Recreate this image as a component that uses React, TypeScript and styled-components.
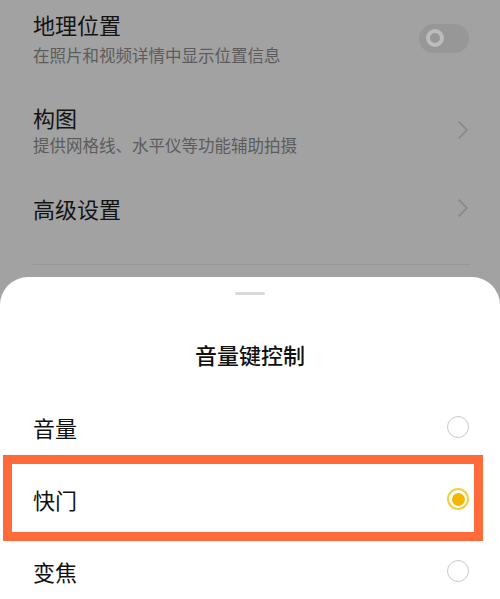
import React from "react";
import styled, { createGlobalStyle } from "styled-components";

const Global = createGlobalStyle`
  html, body { margin: 0; padding: 0; background: #a2a2a2; }
  #root { width: 500px; height: 599px; overflow: hidden; }
  * { box-sizing: border-box; }
`;

const Screen = styled.div`
  width: 500px;
  height: 599px;
  display: flex;
  flex-direction: column;
  background: #a2a2a2;
  font-family: "Noto Sans CJK SC", "Noto Sans", sans-serif;
  overflow: hidden;
`;

const Settings = styled.div`
  padding: 9px 31px 0 33px;
  display: flex;
  flex-direction: column;
`;

const SettingRow = styled.div<{ $top: number }>`
  display: flex;
  align-items: center;
  justify-content: space-between;
  margin-top: ${(p) => p.$top}px;
`;

const TextCol = styled.div`
  display: flex;
  flex-direction: column;
`;

const Title = styled.div`
  font-size: 22px;
  line-height: 30px;
  color: #141414;
`;

const Sub = styled.div<{ $gap: number }>`
  font-size: 16.5px;
  line-height: 24px;
  color: #5c5c5c;
  margin-top: ${(p) => p.$gap}px;
`;

const Toggle = styled.div`
  width: 50px;
  height: 29px;
  border-radius: 15px;
  background: #979797;
  display: flex;
  align-items: center;
  padding-left: 7px;
`;

const Knob = styled.div`
  width: 18px;
  height: 18px;
  border-radius: 50%;
  border: 4px solid #bcbcbc;
`;

const Divider = styled.div`
  height: 1px;
  background: #979797;
  margin: 41px 0 0 0;
  width: 437px;
`;

const Sheet = styled.div`
  flex: 1;
  margin-top: 12px;
  background: #ffffff;
  border-radius: 28px 28px 0 0;
  display: flex;
  flex-direction: column;
`;

const Handle = styled.div`
  width: 30px;
  height: 3px;
  border-radius: 2px;
  background: #d9d9d9;
  margin: 15px auto 0;
`;

const SheetTitle = styled.div`
  margin-top: 44px;
  text-align: center;
  font-size: 22px;
  line-height: 30px;
  font-weight: 500;
  color: #111;
`;

const Options = styled.div`
  margin-top: 22px;
  display: flex;
  flex-direction: column;
`;

const Option = styled.div`
  position: relative;
  height: 72px;
  padding: 0 31px 0 33px;
  display: flex;
  align-items: center;
  justify-content: space-between;
  font-size: 22px;
  color: #111;
`;

const Highlight = styled.div`
  position: absolute;
  left: 3px;
  top: -8px;
  width: 480px;
  height: 86px;
  border: 9px solid #ff6a3b;
  pointer-events: none;
`;

const Radio = styled.div<{ $on: boolean }>`
  width: 22px;
  height: 22px;
  border-radius: 50%;
  border: ${(p) => (p.$on ? "2px solid #f2cf3c" : "1.5px solid #c9c9c9")};
  display: flex;
  align-items: center;
  justify-content: center;
  &::after {
    content: "";
    display: ${(p) => (p.$on ? "block" : "none")};
    width: 13px;
    height: 13px;
    border-radius: 50%;
    background: #f6b500;
  }
`;

const Chevron = () => (
  <svg width="12" height="20" viewBox="0 0 12 20">
    <path d="M1.5 1.5 L10 10 L1.5 18.5" fill="none" stroke="#888" strokeWidth="1.6" />
  </svg>
);

const options = [
  { label: "音量", on: false },
  { label: "快门", on: true },
  { label: "变焦", on: false },
];

export default function App() {
  return (
    <Screen>
      <Global />
      <Settings>
        <SettingRow $top={0}>
          <TextCol>
            <Title>地理位置</Title>
            <Sub $gap={4}>在照片和视频详情中显示位置信息</Sub>
          </TextCol>
          <Toggle>
            <Knob />
          </Toggle>
        </SettingRow>
        <SettingRow $top={35}>
          <TextCol>
            <Title>构图</Title>
            <Sub $gap={1}>提供网格线、水平仪等功能辅助拍摄</Sub>
          </TextCol>
          <Chevron />
        </SettingRow>
        <SettingRow $top={36}>
          <TextCol>
            <Title>高级设置</Title>
          </TextCol>
          <Chevron />
        </SettingRow>
        <Divider />
      </Settings>
      <Sheet>
        <Handle />
        <SheetTitle>音量键控制</SheetTitle>
        <Options>
          {options.map((o) => (
            <Option key={o.label}>
              {o.on && <Highlight />}
              <span>{o.label}</span>
              <Radio $on={o.on} />
            </Option>
          ))}
        </Options>
      </Sheet>
    </Screen>
  );
}
